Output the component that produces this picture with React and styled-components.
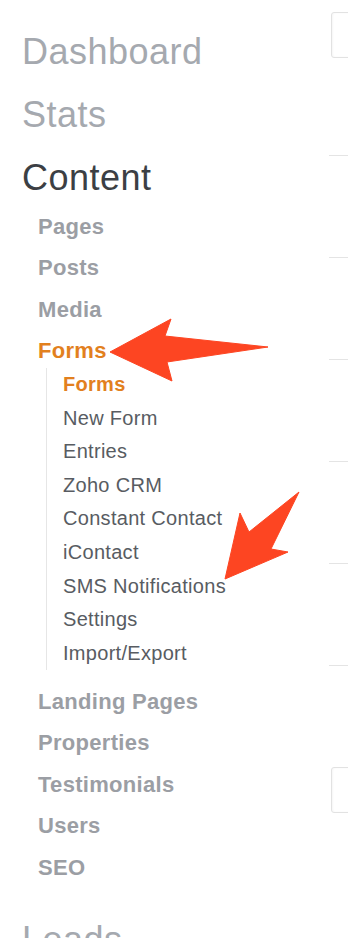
import React from "react";
import styled, {createGlobalStyle} from "styled-components";

const GlobalStyle = createGlobalStyle`
  html, body {
    margin: 0;
    padding: 0;
    background: #ffffff;
    overflow: hidden;
  }
  body {
    font-family: "Liberation Sans", Arial, sans-serif;
    -webkit-font-smoothing: antialiased;
  }
`;

const Page = styled.div`
  position: relative;
  display: flex;
  width: 348px;
  height: 938px;
  overflow: hidden;
`;

const Sidebar = styled.nav`
  flex: 0 0 329px;
  padding-top: 28px;
`;

const List = styled.ul`
  list-style: none;
  margin: 0;
  padding: 0;
`;

const Section = styled.li`
  & + & {
    margin-top: 15px;
  }
`;

const Title = styled.a`
  display: block;
  padding-left: 22px;
  font-size: 36px;
  line-height: 48px;
  letter-spacing: 0.5px;
  color: ${props => props.active ? '#3c3f44' : '#a5a9af'};
  white-space: nowrap;
`;

const SubNav = styled(List)`
  padding-left: 38px;
  padding-bottom: 16px;
`;

const SubLink = styled.a`
  display: block;
  padding-top: 7.5px;
  font-size: 22px;
  font-weight: 700;
  line-height: 34px;
  letter-spacing: 0.3px;
  color: ${props => props.active ? '#e2801e' : '#9b9ea4'};
  white-space: nowrap;
`;

const ChildNav = styled(List)`
  margin: 0 0 7px 8px;
  padding-left: 16px;
  border-left: 1px solid #e6e6e6;
`;

const ChildLink = styled.a`
  display: block;
  font-size: 20px;
  font-weight: ${props => props.active ? 700 : 400};
  line-height: 33.6px;
  letter-spacing: 0.3px;
  color: ${props => props.active ? '#e2801e' : '#585c62'};
  white-space: nowrap;
`;

const Main = styled.main`
  flex: 0 0 400px;
  padding-top: 12px;
`;

const Field = styled.div`
  height: 44px;
  margin-left: 2px;
  border: 1px solid #e2e2e2;
  border-radius: 3px;
  box-shadow: inset 1px 0 2px rgba(0, 0, 0, 0.04);
`;

const Rows = styled.div`
  margin-top: 97px;
`;

const Row = styled.div`
  height: 101px;
  border-top: 1px solid #e4e4e4;
`;

const Arrows = styled.svg`
  position: absolute;
  left: 0;
  top: 0;
  pointer-events: none;
`;

const content = [
    {label: 'Pages'},
    {label: 'Posts'},
    {label: 'Media'},
    {
        label: 'Forms',
        active: true,
        children: ['Forms', 'New Form', 'Entries', 'Zoho CRM', 'Constant Contact', 'iContact', 'SMS Notifications', 'Settings', 'Import/Export']
    },
    {label: 'Landing Pages'},
    {label: 'Properties'},
    {label: 'Testimonials'},
    {label: 'Users'},
    {label: 'SEO'}
];

export default function App() {
    return (
        <>
            <GlobalStyle/>
            <Page>
                <Sidebar>
                    <List>
                        <Section><Title>Dashboard</Title></Section>
                        <Section><Title>Stats</Title></Section>
                        <Section>
                            <Title active>Content</Title>
                            <SubNav>
                                {content.map(item => (
                                    <li key={item.label}>
                                        <SubLink active={item.active}>{item.label}</SubLink>
                                        {item.children && (
                                            <ChildNav>
                                                {item.children.map((child, i) => (
                                                    <li key={child}>
                                                        <ChildLink active={i === 0}>{child}</ChildLink>
                                                    </li>
                                                ))}
                                            </ChildNav>
                                        )}
                                    </li>
                                ))}
                            </SubNav>
                        </Section>
                        <Section><Title>Leads</Title></Section>
                    </List>
                </Sidebar>
                <Main>
                    <Field/>
                    <Rows>
                        {[0, 1, 2, 3, 4, 5].map(i => <Row key={i}/>)}
                    </Rows>
                    <Field/>
                </Main>
                <Arrows width="348" height="938" viewBox="0 0 348 938">
                    <polygon
                        points="110,352 171,319 165,336 268,347 167,362 172,381"
                        fill="#fd4522"
                        stroke="#fd4522"
                        strokeWidth="1"
                        strokeLinejoin="round"
                    />
                    <polygon
                        points="225,579 240,513 249,532 299,492 271,549 288,552"
                        fill="#fd4522"
                        stroke="#fd4522"
                        strokeWidth="1"
                        strokeLinejoin="round"
                    />
                </Arrows>
            </Page>
        </>
    );
}
